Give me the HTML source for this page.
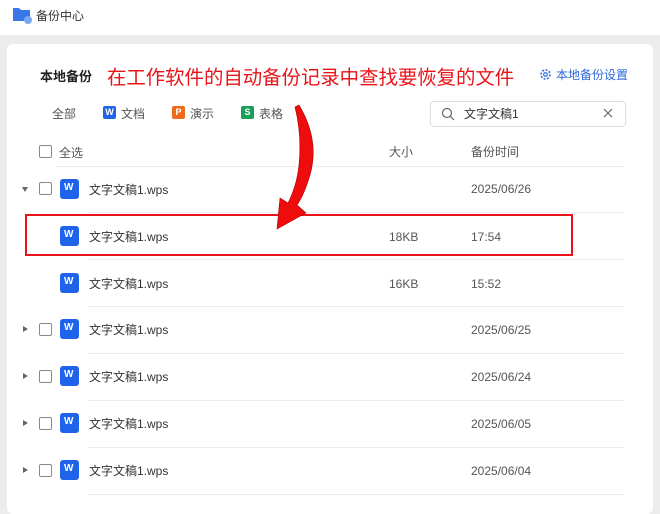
<!DOCTYPE html>
<html><head><meta charset="utf-8"><style>
*{margin:0;padding:0;box-sizing:border-box}
body{width:660px;height:505px;overflow:hidden;background:#ececec;font-family:"Liberation Sans","Noto Sans CJK SC",sans-serif;color:#333;position:relative;font-size:12px}
.top{position:absolute;left:0;top:0;width:660px;height:35px;background:#fff}
.card{position:absolute;left:7px;top:44px;width:646px;height:470px;background:#fff;border-radius:6px}
.a{position:absolute;white-space:nowrap}
.cb{position:absolute;width:13px;height:13px;border:1px solid #888;border-radius:2px;background:#fff}
.w{position:absolute;width:19px;height:20px;background:#1e63e9;border-radius:3px;color:#fff;font-weight:bold;font-size:10px;padding:3px 0 0 4px}
.div{position:absolute;height:1px;background:#eee}
.tri{position:absolute;width:0;height:0;border-left:3px solid transparent;border-right:3px solid transparent;border-top:5px solid #666}
.trr{position:absolute;width:0;height:0;border-top:3px solid transparent;border-bottom:3px solid transparent;border-left:5px solid #666}
.g{color:#555}
</style></head><body>
<div class="top"></div>
<svg class="a" style="left:12px;top:6px" width="22" height="18" viewBox="0 0 22 18"><path d="M1 2h6l2 2h9v11H1z" fill="#3a78e8"/><circle cx="16" cy="14" r="4" fill="#7aa8f0"/></svg>
<div class="a" style="left:36px;top:7px;font-size:12px">备份中心</div>
<div class="card"></div>
<div class="a" style="left:40px;top:66px;font-size:13px;font-weight:bold;color:#222">本地备份</div>
<div class="a" style="left:107px;top:61px;font-size:19.4px;color:#e8141a">在工作软件的自动备份记录中查找要恢复的文件</div>
<svg class="a" style="left:539px;top:68px" width="13" height="13" viewBox="0 0 13 13"><circle cx="6.5" cy="6.5" r="4.5" fill="none" stroke="#2e6ad8" stroke-width="1.6" stroke-dasharray="2 1.5"/><circle cx="6.5" cy="6.5" r="1.8" fill="none" stroke="#2e6ad8" stroke-width="1.2"/></svg>
<div class="a" style="left:556px;top:66px;color:#2e6ad8">本地备份设置</div>
<div class="a g" style="left:52px;top:105px">全部</div>
<div class="a" style="left:103px;top:106px;width:13px;height:13px;background:#1e63e9;border-radius:2px;color:#fff;font-size:9px;font-weight:bold;text-align:center;line-height:13px">W</div>
<div class="a g" style="left:121px;top:105px">文档</div>
<div class="a" style="left:172px;top:106px;width:13px;height:13px;background:#ee6b1e;border-radius:2px;color:#fff;font-size:9px;font-weight:bold;text-align:center;line-height:13px">P</div>
<div class="a g" style="left:190px;top:105px">演示</div>
<div class="a" style="left:241px;top:106px;width:13px;height:13px;background:#16a05a;border-radius:2px;color:#fff;font-size:9px;font-weight:bold;text-align:center;line-height:13px">S</div>
<div class="a g" style="left:259px;top:105px">表格</div>
<div class="a" style="left:430px;top:101px;width:196px;height:26px;border:1px solid #ddd;border-radius:4px"></div>
<svg class="a" style="left:441px;top:107px" width="14" height="14" viewBox="0 0 14 14"><circle cx="6" cy="6" r="4.5" fill="none" stroke="#666" stroke-width="1.2"/><path d="M9.3 9.3L13 13" stroke="#666" stroke-width="1.2"/></svg>
<div class="a" style="left:464px;top:105px">文字文稿1</div>
<svg class="a" style="left:603px;top:108px" width="10" height="10" viewBox="0 0 10 10"><path d="M1 1L9 9M9 1L1 9" stroke="#666" stroke-width="1.2"/></svg>
<div class="cb" style="left:39px;top:145px"></div>
<div class="a g" style="left:59px;top:144px">全选</div>
<div class="a g" style="left:389px;top:143px">大小</div>
<div class="a g" style="left:471px;top:143px">备份时间</div>
<div class="div" style="left:55px;top:166px;width:570px"></div>

<div class="tri" style="left:22px;top:187px"></div><div class="cb" style="left:39px;top:182px"></div>
<div class="w" style="left:60px;top:179px">W</div><div class="a" style="left:89px;top:181px">文字文稿1.wps</div>
<div class="a g" style="left:471px;top:182px">2025/06/26</div>
<div class="div" style="left:88px;top:212px;width:537px"></div>

<div class="w" style="left:60px;top:226px">W</div><div class="a" style="left:89px;top:228px">文字文稿1.wps</div>
<div class="a g" style="left:389px;top:230px">18KB</div><div class="a g" style="left:471px;top:230px">17:54</div>
<div class="div" style="left:88px;top:259px;width:537px"></div>

<div class="w" style="left:60px;top:273px">W</div><div class="a" style="left:89px;top:275px">文字文稿1.wps</div>
<div class="a g" style="left:389px;top:277px">16KB</div><div class="a g" style="left:471px;top:277px">15:52</div>
<div class="div" style="left:88px;top:306px;width:537px"></div>

<div class="trr" style="left:23px;top:326px"></div><div class="cb" style="left:39px;top:323px"></div>
<div class="w" style="left:60px;top:319px">W</div><div class="a" style="left:89px;top:321px">文字文稿1.wps</div>
<div class="a g" style="left:471px;top:323px">2025/06/25</div>
<div class="div" style="left:88px;top:353px;width:537px"></div>

<div class="trr" style="left:23px;top:373px"></div><div class="cb" style="left:39px;top:370px"></div>
<div class="w" style="left:60px;top:366px">W</div><div class="a" style="left:89px;top:368px">文字文稿1.wps</div>
<div class="a g" style="left:471px;top:370px">2025/06/24</div>
<div class="div" style="left:88px;top:400px;width:537px"></div>

<div class="trr" style="left:23px;top:420px"></div><div class="cb" style="left:39px;top:417px"></div>
<div class="w" style="left:60px;top:413px">W</div><div class="a" style="left:89px;top:415px">文字文稿1.wps</div>
<div class="a g" style="left:471px;top:417px">2025/06/05</div>
<div class="div" style="left:88px;top:447px;width:537px"></div>

<div class="trr" style="left:23px;top:467px"></div><div class="cb" style="left:39px;top:464px"></div>
<div class="w" style="left:60px;top:460px">W</div><div class="a" style="left:89px;top:462px">文字文稿1.wps</div>
<div class="a g" style="left:471px;top:464px">2025/06/04</div>
<div class="div" style="left:88px;top:494px;width:537px"></div>

<div class="a" style="left:25px;top:214px;width:548px;height:42px;border:2px solid #e8141a"></div>
<svg class="a" style="left:0;top:0" width="660" height="505"><path d="M299 105Q320 140 310 175Q304 195 297 205L306 213L277 229L280 198L288 203Q297 185 299 165Q302 135 295 107Z" fill="#ee0c0c" stroke="#a00" stroke-width="0.6"/></svg>
</body></html>
